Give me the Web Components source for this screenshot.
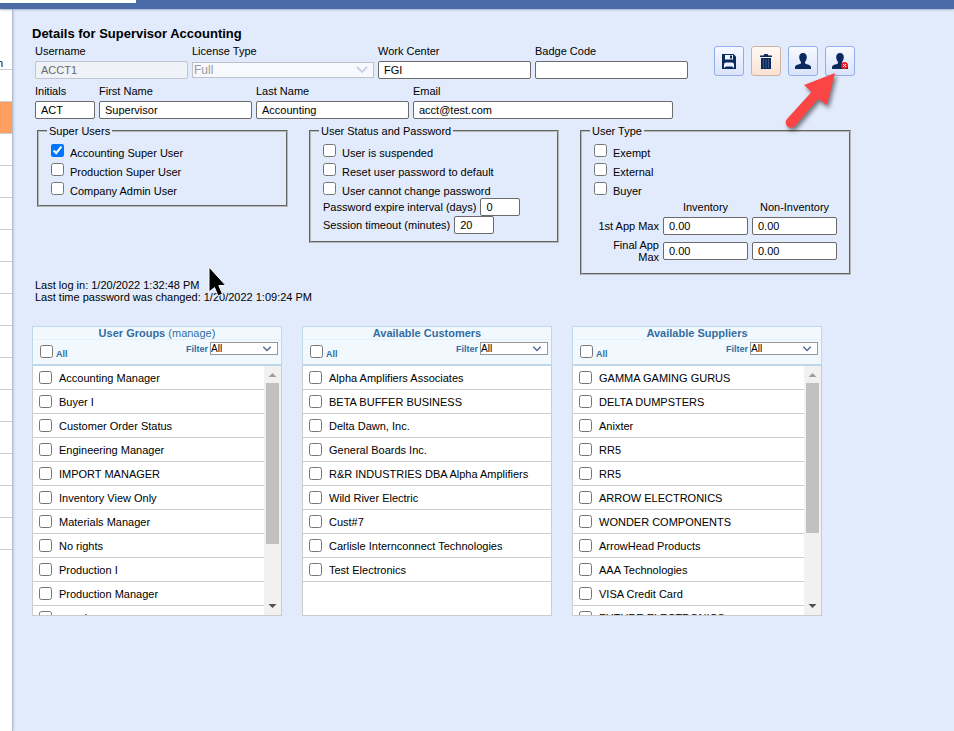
<!DOCTYPE html>
<html lang="en">
<head>
<meta charset="utf-8">
<title>Details for Supervisor Accounting</title>
<style>
  body {
    margin: 0;
    min-height: 100vh;
    background: #e2ebfc;
    color: #000;
    font: 11px/12px "Liberation Sans", Arial, sans-serif;
  }
  h1 {
    margin: 0 0 3px;
    font-size: 13px;
    line-height: 16px;
  }
  .top {
    display: flex;
    align-items: flex-start;
    gap: 26px;
  }
  .fields {
    display: flex;
    flex-direction: column;
    gap: 6px;
    padding-left: 3px;
  }
  .row {
    display: flex;
    gap: 4px;
  }
  .groups {
    display: flex;
    align-items: flex-start;
    gap: 21px;
    margin: 6px 0 0 5px;
  }
  .checks {
    display: flex;
    flex-direction: column;
    gap: 3px;
  }
  .log {
    position: relative;
    margin: 4px 0 23px 3px;
  }
  .log p {
    margin: 0;
  }
  .log svg {
    position: absolute;
    left: 172px;
    top: -14px;
  }
  .lists {
    display: flex;
    gap: 20px;
  }
  .lists pick-list {
    flex: 0 1 250px;
  }
  th, td {
    padding: 0;
    font-weight: normal;
  }
  table {
    margin-left: 4px;
    border-spacing: 4px 3px;
  }
  thead th {
    height: 13px;
    vertical-align: top;
  }
  tbody th {
    width: 61px;
    text-align: right;
  }
  tbody tr:last-child {
    height: 25px;
  }
</style>
</head>
<body>

<app-shell>
  <h1>Details for Supervisor Accounting</h1>
  <div class="top">
    <div class="fields">
      <div class="row">
        <text-field label="Username" value="ACCT1" width="153" disabled></text-field>
        <select-field label="License Type" value="Full" disabled></select-field>
        <text-field label="Work Center" value="FGI" width="153"></text-field>
        <text-field label="Badge Code" value="" width="153"></text-field>
      </div>
      <div class="row">
        <text-field label="Initials" value="ACT" width="60"></text-field>
        <text-field label="First Name" value="Supervisor" width="153"></text-field>
        <text-field label="Last Name" value="Accounting" width="153"></text-field>
        <text-field label="Email" value="acct@test.com" width="260"></text-field>
      </div>
    </div>
    <tool-bar></tool-bar>
  </div>

  <div class="groups">
    <group-box legend="Super Users" width="251">
      <div class="checks">
        <check-item checked>Accounting Super User</check-item>
        <check-item>Production Super User</check-item>
        <check-item>Company Admin User</check-item>
      </div>
    </group-box>
    <group-box legend="User Status and Password" width="250">
      <div class="checks">
        <check-item>User is suspended</check-item>
        <check-item>Reset user password to default</check-item>
        <check-item>User cannot change password</check-item>
      </div>
      <text-field inline label="Password expire interval (days)" value="0" width="40"></text-field>
      <text-field inline label="Session timeout (minutes)" value="20" width="40"></text-field>
    </group-box>
    <group-box legend="User Type" width="271">
      <div class="checks">
        <check-item>Exempt</check-item>
        <check-item>External</check-item>
        <check-item>Buyer</check-item>
      </div>
      <table>
        <thead>
          <tr><td></td><th scope="col">Inventory</th><th scope="col">Non-Inventory</th></tr>
        </thead>
        <tbody>
          <tr>
            <th scope="row">1st App Max</th>
            <td><text-field name="1st App Max, inventory" value="0.00" width="85"></text-field></td>
            <td><text-field name="1st App Max, non-inventory" value="0.00" width="85"></text-field></td>
          </tr>
          <tr>
            <th scope="row">Final App Max</th>
            <td><text-field name="Final App Max, inventory" value="0.00" width="85"></text-field></td>
            <td><text-field name="Final App Max, non-inventory" value="0.00" width="85"></text-field></td>
          </tr>
        </tbody>
      </table>
    </group-box>
  </div>

  <div class="log">
    <p>Last log in: 1/20/2022 1:32:48 PM</p>
    <p>Last time password was changed: 1/20/2022 1:09:24 PM</p>
    <svg width="22" height="34" viewBox="0 0 22 34" aria-hidden="true">
      <path d="M2 2V27L7.500 22.500L11 31L15.500 29L11.800 20.500H18.800Z" fill="#000" stroke="#fff"/>
    </svg>
  </div>

  <div class="lists">
    <pick-list heading="User Groups" link="manage" thumb="161"
      items="Accounting Manager|Buyer I|Customer Order Status|Engineering Manager|IMPORT MANAGER|Inventory View Only|Materials Manager|No rights|Production I|Production Manager|round"></pick-list>
    <pick-list heading="Available Customers"
      items="Alpha Amplifiers Associates|BETA BUFFER BUSINESS|Delta Dawn, Inc.|General Boards Inc.|R&amp;R INDUSTRIES DBA Alpha Amplifiers|Wild River Electric|Cust#7|Carlisle Internconnect Technologies|Test Electronics"></pick-list>
    <pick-list heading="Available Suppliers" thumb="150"
      items="GAMMA GAMING GURUS|DELTA DUMPSTERS|Anixter|RR5|RR5|ARROW ELECTRONICS|WONDER COMPONENTS|ArrowHead Products|AAA Technologies|VISA Credit Card|FUTURE ELECTRONICS"></pick-list>
  </div>
</app-shell>

<script>
// Page frame: top bar, the edge of the side list and the content area
class AppShell extends HTMLElement {
  constructor() {
    super();
    this.attachShadow({ mode: "open" });
    this.shadowRoot.innerHTML = `
      <style>
        :host {
          display: flex;
          flex-direction: column;
          min-height: 100vh;
        }
        header {
          height: 9px;
          background: #4a6ba5;
          box-shadow: 0 1px 2px #a8b4cc;
          z-index: 1;
        }
        .tab {
          width: 136px;
          height: 3px;
          background: #fff;
        }
        .body {
          display: flex;
          flex: 1;
        }
        nav {
          flex: 0 0 12px;
          overflow: hidden;
          background: #fff;
          border-right: 1px solid #b4bccb;
          box-shadow: 1px 0 2px #c4cde0;
        }
        .item {
          height: 31px;
          border-bottom: 1px solid #ccc;
        }
        .item.first {
          height: 60px;
          display: flex;
          align-items: flex-end;
          justify-content: flex-end;
          width: 3px;
          padding-right: 9px;
        }
        .item.active {
          background: #ff9f60;
        }
        main {
          flex: 1;
          min-width: 0;
          padding: 17px 19px;
        }
      </style>
      <header><div class="tab"></div></header>
      <div class="body">
        <nav>
          <div class="item first">n</div>
          <div class="item"></div>
          <div class="item active"></div>
        </nav>
        <main><slot></slot></main>
      </div>
    `;
    const nav = this.shadowRoot.querySelector("nav");
    for (let i = 0; i < 13; i++) {
      const item = document.createElement("div");
      item.className = "item";
      nav.appendChild(item);
    }
  }
}
customElements.define("app-shell", AppShell);

class TextField extends HTMLElement {
  connectedCallback() {
    this.attachShadow({ mode: "open" });
    this.shadowRoot.innerHTML = `
      <style>
        :host {
          display: flex;
          flex-direction: column;
          gap: 4px;
        }
        :host([inline]) {
          flex-direction: row;
          align-items: center;
          padding-left: 4px;
        }
        input {
          box-sizing: border-box;
          height: 18px;
          margin: 0;
          padding: 0 5px;
          border: 1px solid #6b6b6b;
          border-radius: 2px;
          background: #fff;
          color: #000;
          font: inherit;
        }
        input:disabled {
          border-color: #c0c5cf;
          background: #eff2f6;
          color: #6a6a6a;
        }
      </style>
      <label for="input"></label>
      <input id="input" type="text">
    `;
    const label = this.shadowRoot.querySelector("label");
    const input = this.shadowRoot.querySelector("input");
    if (this.hasAttribute("label")) {
      label.textContent = this.getAttribute("label");
    } else {
      label.remove();
      input.setAttribute("aria-label", this.getAttribute("name"));
    }
    input.value = this.getAttribute("value");
    input.style.width = this.getAttribute("width") + "px";
    input.disabled = this.hasAttribute("disabled");
  }
}
customElements.define("text-field", TextField);

class SelectField extends HTMLElement {
  connectedCallback() {
    this.attachShadow({ mode: "open" });
    this.shadowRoot.innerHTML = `
      <style>
        :host {
          display: flex;
          flex-direction: column;
          gap: 5px;
        }
        :host([small]) {
          flex-direction: row;
          align-items: center;
          gap: 2px;
        }
        :host([small]) label {
          font-size: 9px;
          font-weight: bold;
        }
        .box {
          display: grid;
          align-items: center;
          width: 182px;
          height: 16px;
        }
        :host([small]) .box {
          width: 68px;
          height: 13px;
        }
        select, svg {
          grid-area: 1 / 1;
        }
        select {
          appearance: none;
          box-sizing: border-box;
          width: 100%;
          height: 100%;
          margin: 0;
          padding: 0 1px;
          border: 1px solid #999;
          border-radius: 0;
          background: #fff;
          color: #000;
          font: inherit;
          font-size: 12px;
        }
        :host([small]) select {
          padding: 0;
          font-size: 10px;
          line-height: 11px;
        }
        select:disabled {
          border-color: #bcc1cb;
          background: #f7f9fe;
          color: #999;
          opacity: 1;
        }
        svg {
          justify-self: end;
          margin-right: 6px;
          pointer-events: none;
          stroke: #52678f;
        }
        select:disabled + svg {
          stroke: #c5d0e2;
        }
      </style>
      <label for="select"></label>
      <div class="box">
        <select id="select"><option></option></select>
        <svg width="12" height="8" viewBox="0 0 12 8" fill="none" stroke-width="1.800"><path d="M1 1L6 6L11 1"/></svg>
      </div>
    `;
    this.shadowRoot.querySelector("label").textContent = this.getAttribute("label");
    this.shadowRoot.querySelector("option").textContent = this.getAttribute("value");
    this.shadowRoot.querySelector("select").disabled = this.hasAttribute("disabled");
    if (this.hasAttribute("small")) {
      const svg = this.shadowRoot.querySelector("svg");
      svg.setAttribute("width", 10);
      svg.setAttribute("height", 6);
    }
  }
}
customElements.define("select-field", SelectField);

class CheckItem extends HTMLElement {
  connectedCallback() {
    this.attachShadow({ mode: "open" });
    this.shadowRoot.innerHTML = `
      <style>
        :host {
          display: block;
          padding-left: 4px;
        }
        label {
          display: flex;
          align-items: flex-start;
          gap: 6px;
          height: 16px;
        }
        input {
          width: 13px;
          height: 13px;
          margin: 0;
        }
        span {
          padding-top: 3px;
        }
      </style>
      <label><input type="checkbox"><span><slot></slot></span></label>
    `;
    this.shadowRoot.querySelector("input").checked = this.hasAttribute("checked");
  }
}
customElements.define("check-item", CheckItem);

class GroupBox extends HTMLElement {
  connectedCallback() {
    this.attachShadow({ mode: "open" });
    this.shadowRoot.innerHTML = `
      <style>
        :host {
          display: block;
          flex: 0 1 auto;
        }
        fieldset {
          min-width: 0;
          margin: 0;
          padding: 7px 8px;
          border: 2px groove #b8b8b8;
        }
        legend {
          padding: 0 2px;
        }
      </style>
      <fieldset><legend></legend><slot></slot></fieldset>
    `;
    this.style.width = this.getAttribute("width") + "px";
    this.shadowRoot.querySelector("legend").textContent = this.getAttribute("legend");
  }
}
customElements.define("group-box", GroupBox);

class ToolBar extends HTMLElement {
  constructor() {
    super();
    const person = "M8 0C10.600 0 11.800 1.700 11.800 4C11.800 6 11 7.800 10 9V10.500C12 11.500 16 11.500 16 14.500V16H0V14.500C0 11.500 4 11.500 6 10.500V9C5 7.800 4.200 6 4.200 4C4.200 1.700 5.400 0 8 0Z";
    this.attachShadow({ mode: "open" });
    this.shadowRoot.innerHTML = `
      <style>
        :host {
          position: relative;
          display: flex;
          gap: 7px;
          padding-top: 1px;
        }
        button {
          display: flex;
          align-items: center;
          justify-content: center;
          width: 30px;
          height: 30px;
          padding: 0;
          border: 1px solid #93acec;
          border-radius: 3px;
          background: linear-gradient(#f6f9ff, #d9e3fb);
          color: #0a2a5e;
        }
        button.delete {
          border-color: #d0b2a2;
          background: linear-gradient(#fffaf6, #fae1d2);
        }
        .pointer {
          position: absolute;
          left: 67px;
          top: 24px;
          filter: drop-shadow(2px 3px 2px rgba(0, 0, 0, 0.5));
          pointer-events: none;
        }
      </style>
      <button type="button" aria-label="Save">
        <svg width="14" height="15" viewBox="0 0 14 15">
          <path d="M0 0H11.500L14 2.500V15H0Z" fill="currentColor"/>
          <path d="M3 1H11V5.500H3Z" fill="#eef3ff"/>
          <path d="M8 1.500H10V4.500H8Z" fill="currentColor"/>
          <path d="M2 14V10.500Q2 8.500 4 8.500H10Q12 8.500 12 10.500V14L10 12.500H4Z" fill="#eef3ff"/>
        </svg>
      </button>
      <button type="button" class="delete" aria-label="Delete">
        <svg width="12" height="15" viewBox="0 0 12 15">
          <path d="M0 1.500H3.500L4.500 0H7.500L8.500 1.500H12V3H0ZM1 4H11V15H1Z" fill="currentColor"/>
          <path d="M3.500 5V14M6 5V14M8.500 5V14" stroke="#66789d" stroke-width=".6"/>
        </svg>
      </button>
      <button type="button" aria-label="User">
        <svg width="16" height="16" viewBox="0 0 16 16"><path d="${person}" fill="currentColor"/></svg>
      </button>
      <button type="button" aria-label="Remove user">
        <svg width="16" height="16" viewBox="0 0 16 16">
          <path d="${person}" fill="currentColor"/>
          <circle cx="12.500" cy="12.500" r="3.500" fill="#ee1c24"/>
          <path d="M11 11L14 14M14 11L11 14" stroke="#fff"/>
        </svg>
      </button>
      <svg class="pointer" width="60" height="62" viewBox="781 69 60 62" aria-hidden="true">
        <path d="M835 73L804 85L811.500 92L787 119A5 5 0 0 0 795 126L818 99L827 105Z" fill="#fb4545"/>
      </svg>
    `;
  }
}
customElements.define("tool-bar", ToolBar);

class PickList extends HTMLElement {
  connectedCallback() {
    this.attachShadow({ mode: "open" });
    this.shadowRoot.innerHTML = `
      <style>
        :host {
          display: block;
          min-width: 0;
        }
        header {
          border: 1px solid #bfd8e9;
          border-bottom-width: 2px;
          background: #f1f9ff;
          color: #336d9f;
        }
        h2 {
          margin: 0;
          font-size: 11px;
          text-align: center;
          border-bottom: 1px solid #e6f1fa;
        }
        h2 a {
          color: inherit;
          font-weight: normal;
          text-decoration: none;
        }
        .tools {
          display: flex;
          align-items: flex-start;
          justify-content: space-between;
          height: 22px;
          padding: 2px 3px 0 7px;
        }
        .all {
          display: flex;
          gap: 3px;
          padding-top: 3px;
          font-size: 9px;
          font-weight: bold;
        }
        .all span {
          padding-top: 3px;
        }
        input {
          flex: none;
          width: 13px;
          height: 13px;
          margin: 0;
        }
        .body {
          display: flex;
          height: 249px;
          border: 1px solid #ccc;
          border-top: 0;
          background: #fff;
          overflow: hidden;
        }
        ul {
          flex: 1;
          min-width: 0;
          margin: 0;
          padding: 0;
          list-style: none;
        }
        li label {
          display: flex;
          align-items: center;
          gap: 7px;
          height: 23px;
          padding-left: 6px;
          border-bottom: 1px solid #ccc;
        }
        .scroll {
          display: flex;
          flex-direction: column;
          align-items: center;
          width: 17px;
          background: #f1f1f1;
        }
        .scroll svg {
          flex: none;
        }
        .thumb {
          width: 13px;
          background: #c1c1c1;
          margin-bottom: auto;
        }
      </style>
      <header>
        <h2></h2>
        <div class="tools">
          <label class="all"><input type="checkbox"><span>All</span></label>
          <select-field small label="Filter" value="All"></select-field>
        </div>
      </header>
      <div class="body"><ul></ul></div>
    `;
    const title = this.shadowRoot.querySelector("h2");
    title.textContent = this.getAttribute("heading");
    if (this.hasAttribute("link")) {
      title.insertAdjacentHTML("beforeend", ` <a href="#">(${this.getAttribute("link")})</a>`);
    }

    const list = this.shadowRoot.querySelector("ul");
    this.getAttribute("items").split("|").forEach((name) => {
      const li = document.createElement("li");
      li.innerHTML = `<label><input type="checkbox"><span></span></label>`;
      li.querySelector("span").textContent = name;
      list.appendChild(li);
    });

    // Only lists longer than the box get a scroll bar
    if (this.hasAttribute("thumb")) {
      list.insertAdjacentHTML("afterend", `
        <div class="scroll">
          <svg width="17" height="17"><path d="M4.500 11H12.500L8.500 7Z" fill="#a0a0a0"/></svg>
          <div class="thumb" style="height: ${this.getAttribute("thumb")}px"></div>
          <svg width="17" height="17"><path d="M4.500 6H12.500L8.500 10Z" fill="#505050"/></svg>
        </div>
      `);
    }
  }
}
customElements.define("pick-list", PickList);
</script>
</body>
</html>
